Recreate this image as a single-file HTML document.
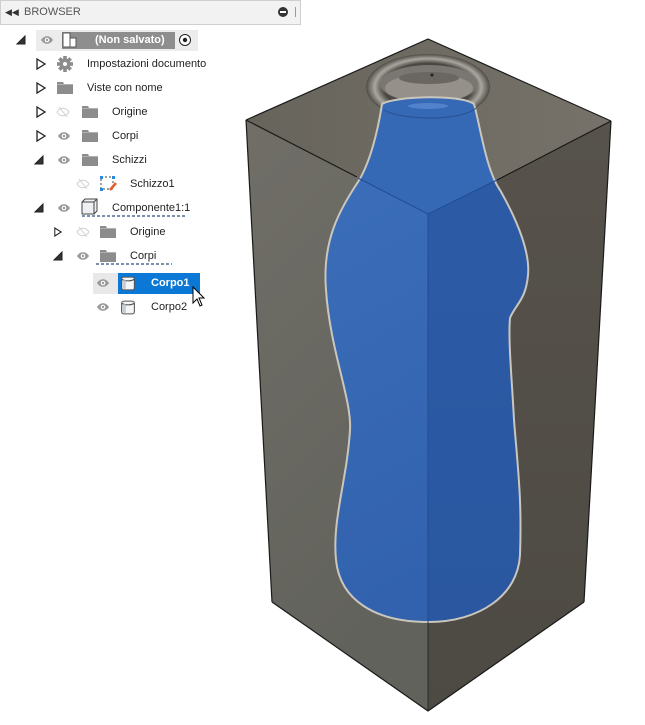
<!DOCTYPE html>
<html><head><meta charset="utf-8"><style>
body{margin:0;width:645px;height:725px;background:#fff;position:relative;overflow:hidden;font-family:"Liberation Sans",Arial,sans-serif;font-size:11px;color:#222}
.a{position:absolute}
.t{position:absolute;line-height:14px;white-space:nowrap}
</style></head><body>
<svg class="a" style="left:0;top:0" width="645" height="725">
<defs>
<linearGradient id="lf" x1="0" y1="0" x2="0.3" y2="1"><stop offset="0" stop-color="#706e67"/><stop offset="1" stop-color="#62625c"/></linearGradient>
<linearGradient id="rf" x1="0" y1="0" x2="0" y2="1"><stop offset="0" stop-color="#57534c"/><stop offset="1" stop-color="#4d4943"/></linearGradient>
<linearGradient id="tf" x1="0" y1="0" x2="1" y2="0"><stop offset="0" stop-color="#67645c"/><stop offset="1" stop-color="#76726a"/></linearGradient>
<linearGradient id="bl" x1="0" y1="0" x2="0.2" y2="1"><stop offset="0" stop-color="#3c6fba"/><stop offset="1" stop-color="#3262ae"/></linearGradient>
<linearGradient id="br" x1="0" y1="0" x2="0" y2="1"><stop offset="0" stop-color="#2d5ba6"/><stop offset="1" stop-color="#2a57a0"/></linearGradient>
<radialGradient id="rg" cx="0.5" cy="0.5" r="0.5"><stop offset="0.72" stop-color="#4a4743"/><stop offset="0.86" stop-color="#a9a69f"/><stop offset="1" stop-color="#4f4c47"/></radialGradient>
<clipPath id="cl"><polygon points="246,120 428,214 428,711 272,602"/></clipPath>
<clipPath id="cr"><polygon points="428,214 611,121 584,602 428,711"/></clipPath>
<clipPath id="ct"><polygon points="428,39 611,121 428,214 246,120"/></clipPath>
<path id="bt" d="M382,104 C395,96 460,94 474,104 C480,125 486,170 500,190 C520,225 530,255 528,275 C526,300 515,305 510,318 C508,340 512,380 514,420 C518,470 522,500 520,555 C518,595 480,622 428,622 C375,622 340,600 336,560 C332,520 347,480 350,430 C352,400 330,350 326,290 C322,240 340,210 356,185 C370,165 378,130 382,104 Z"/>
</defs>
<polygon points="428,39 611,121 428,214 246,120" fill="url(#tf)"/>
<polygon points="246,120 428,214 428,711 272,602" fill="url(#lf)"/>
<polygon points="428,214 611,121 584,602 428,711" fill="url(#rf)"/>
<ellipse cx="428" cy="87" rx="62" ry="33" fill="url(#rg)"/>
<ellipse cx="429" cy="84" rx="49" ry="19" fill="#7a7772"/>
<ellipse cx="429" cy="88" rx="44" ry="14" fill="#959089"/>
<ellipse cx="429" cy="78" rx="30" ry="6" fill="#6a6661"/>
<circle cx="432" cy="75" r="1.5" fill="#222"/>
<g clip-path="url(#cl)"><use href="#bt" fill="url(#bl)"/></g>
<g clip-path="url(#cr)"><use href="#bt" fill="url(#br)"/></g>
<g clip-path="url(#ct)"><use href="#bt" fill="#3569b6"/></g>
<use href="#bt" fill="none" stroke="#c9c6bd" stroke-width="2"/>
<path d="M384,110 C400,120 460,122 476,108" fill="none" stroke="#2a4f8f" stroke-width="1"/>
<ellipse cx="428" cy="106" rx="20" ry="3" fill="#6f9be0" opacity="0.5"/>
<g fill="none" stroke="#1a1a1a" stroke-width="1.2">
<polyline points="246,120 428,39 611,121"/>
<polyline points="246,120 357,177"/><polyline points="497,180 611,121"/>
<line x1="246" y1="120" x2="272" y2="602"/><line x1="611" y1="121" x2="584" y2="602"/>
<polyline points="272,602 428,711 584,602"/>
</g>
<polyline points="358,178 428,214 497,180" fill="none" stroke="#1f4d95" stroke-width="1"/>
<line x1="428" y1="214" x2="428" y2="622" stroke="#1f4d95" stroke-width="1"/>
<line x1="428" y1="622" x2="428" y2="711" stroke="#2a2a2a" stroke-width="1"/>
</svg>

<div class="a" style="left:0;top:0;width:299px;height:23px;background:#f2f2f2;border:1px solid #cfcfcf"></div>
<div class="t" style="left:5px;top:5px;font-size:9px;color:#333">◀◀</div>
<div class="t" style="left:24px;top:5px;color:#555;font-size:11px">BROWSER</div>
<div class="a" style="left:278px;top:7px;width:10px;height:10px;border-radius:50%;background:#333"></div>
<div class="a" style="left:280px;top:11px;width:6px;height:2px;background:#fff"></div>
<div class="a" style="left:295px;top:7px;width:1px;height:10px;background:#999"></div>

<svg class="a" style="left:0;top:24px" width="300" height="300">
<defs>
<symbol id="to" viewBox="0 0 10 12"><path d="M1,1 L9,6 L1,11 Z" fill="none" stroke="#222" stroke-width="1.3"/></symbol>
<symbol id="tc" viewBox="0 0 10 10"><path d="M9,1 L9,9 L1,9 Z" fill="#333" stroke="#222"/></symbol>
<symbol id="eye" viewBox="0 0 14 10"><path d="M1,5 C4,0 10,0 13,5 C10,10 4,10 1,5 Z" fill="#9a9a9a"/><circle cx="7" cy="5" r="2.3" fill="#fff"/><circle cx="7" cy="5" r="1.2" fill="#9a9a9a"/></symbol>
<symbol id="eyh" viewBox="0 0 14 10"><path d="M1,5 C4,0 10,0 13,5 C10,10 4,10 1,5 Z" fill="none" stroke="#d0d0d0"/><line x1="3" y1="0" x2="11" y2="10" stroke="#d0d0d0"/></symbol>
<symbol id="fo" viewBox="0 0 16 12"><path d="M0,0 H6 L7,2 H16 V12 H0 Z" fill="#8c8c8c"/><rect x="0" y="2" width="16" height="1" fill="#b0b0b0"/></symbol>
<symbol id="cy" viewBox="0 0 14 16"><rect x="1" y="2" width="12" height="12" rx="2" fill="#f4f6f8" stroke="#555"/><path d="M1,4 C4,6 10,6 13,4" fill="none" stroke="#555"/><rect x="2" y="5" width="3" height="8" fill="#c8ccd2"/></symbol>
</defs>
<use href="#tc" x="16" y="11" width="10" height="10"/>
<rect x="36" y="6" width="162" height="21" fill="#ececec"/>
<use href="#eye" x="40" y="11" width="14" height="10"/>
<rect x="62" y="8" width="113" height="17" fill="#8e8e8e"/>
<path d="M63,9 H70 V14 H76 V23 H63 Z" fill="#fff" stroke="#555"/><line x1="70" y1="14" x2="70" y2="23" stroke="#555"/>
<circle cx="185" cy="16" r="5.5" fill="#fff" stroke="#222"/><circle cx="185" cy="16" r="2.2" fill="#222"/>
<use href="#to" x="36" y="34" width="10" height="12"/>
<g transform="translate(65,40)" fill="#8c8c8c"><circle r="5.5"/><rect x="-1.8" y="-8" width="3.6" height="16"/><rect x="-8" y="-1.8" width="16" height="3.6"/><rect x="-1.8" y="-8" width="3.6" height="16" transform="rotate(45)"/><rect x="-1.8" y="-8" width="3.6" height="16" transform="rotate(-45)"/><circle r="2" fill="#fff"/></g>
<use href="#to" x="36" y="58" width="10" height="12"/>
<use href="#fo" x="57" y="58" width="16" height="12"/>
<use href="#to" x="36" y="82" width="10" height="12"/>
<use href="#eyh" x="56" y="83" width="14" height="10"/>
<use href="#fo" x="82" y="82" width="16" height="12"/>
<use href="#to" x="36" y="106" width="10" height="12"/>
<use href="#eye" x="57" y="107" width="14" height="10"/>
<use href="#fo" x="82" y="106" width="16" height="12"/>
<use href="#tc" x="34" y="131" width="10" height="10"/>
<use href="#eye" x="57" y="131" width="14" height="10"/>
<use href="#fo" x="82" y="130" width="16" height="12"/>
<use href="#eyh" x="76" y="155" width="14" height="10"/>
<rect x="101" y="153" width="12" height="12" fill="none" stroke="#444" stroke-dasharray="2,2"/>
<rect x="100" y="152" width="3" height="3" fill="#2a8ae0"/><rect x="112" y="152" width="3" height="3" fill="#2a8ae0"/><rect x="100" y="164" width="3" height="3" fill="#2a8ae0"/>
<path d="M110,166 L116,159" stroke="#e85a2a" stroke-width="2.5"/>
<use href="#tc" x="34" y="179" width="10" height="10"/>
<use href="#eye" x="57" y="179" width="14" height="10"/>
<path d="M82,178 L85,175 H97 V187 L94,190 H82 Z" fill="#eef0f3" stroke="#444"/><path d="M82,178 H94 V190 M94,178 L97,175" fill="none" stroke="#444"/>
<line x1="82" y1="192" x2="186" y2="192" stroke="#7b8fb0" stroke-width="2" stroke-dasharray="3,2"/>
<use href="#to" x="54" y="202" width="8" height="12"/>
<use href="#eyh" x="76" y="203" width="14" height="10"/>
<use href="#fo" x="100" y="202" width="16" height="12"/>
<use href="#tc" x="53" y="227" width="10" height="10"/>
<use href="#eye" x="76" y="227" width="14" height="10"/>
<use href="#fo" x="100" y="226" width="16" height="12"/>
<line x1="96" y1="240" x2="172" y2="240" stroke="#7b8fb0" stroke-width="2" stroke-dasharray="3,2"/>
<rect x="93" y="249" width="25" height="21" fill="#e8e8e8"/>
<rect x="118" y="249" width="82" height="21" fill="#0a78d4"/>
<use href="#eye" x="96" y="254" width="14" height="10"/>
<use href="#cy" x="120" y="251" width="16" height="17"/>
<path d="M193,263 V279 L197,275 L200,282 L202,281 L199,274 L204,274 Z" fill="#fff" stroke="#000"/>
<use href="#eye" x="96" y="278" width="14" height="10"/>
<use href="#cy" x="120" y="275" width="16" height="17"/>
</svg>
<div class="t" style="left:95px;top:33px;color:#fff;font-weight:bold">(Non salvato)</div>
<div class="t" style="left:87px;top:57px">Impostazioni documento</div>
<div class="t" style="left:87px;top:81px">Viste con nome</div>
<div class="t" style="left:112px;top:105px">Origine</div>
<div class="t" style="left:112px;top:129px">Corpi</div>
<div class="t" style="left:112px;top:153px">Schizzi</div>
<div class="t" style="left:130px;top:177px">Schizzo1</div>
<div class="t" style="left:112px;top:201px">Componente1:1</div>
<div class="t" style="left:130px;top:225px">Origine</div>
<div class="t" style="left:130px;top:249px">Corpi</div>
<div class="t" style="left:151px;top:276px;color:#fff;font-weight:bold">Corpo1</div>
<div class="t" style="left:151px;top:300px">Corpo2</div>
</body></html>
